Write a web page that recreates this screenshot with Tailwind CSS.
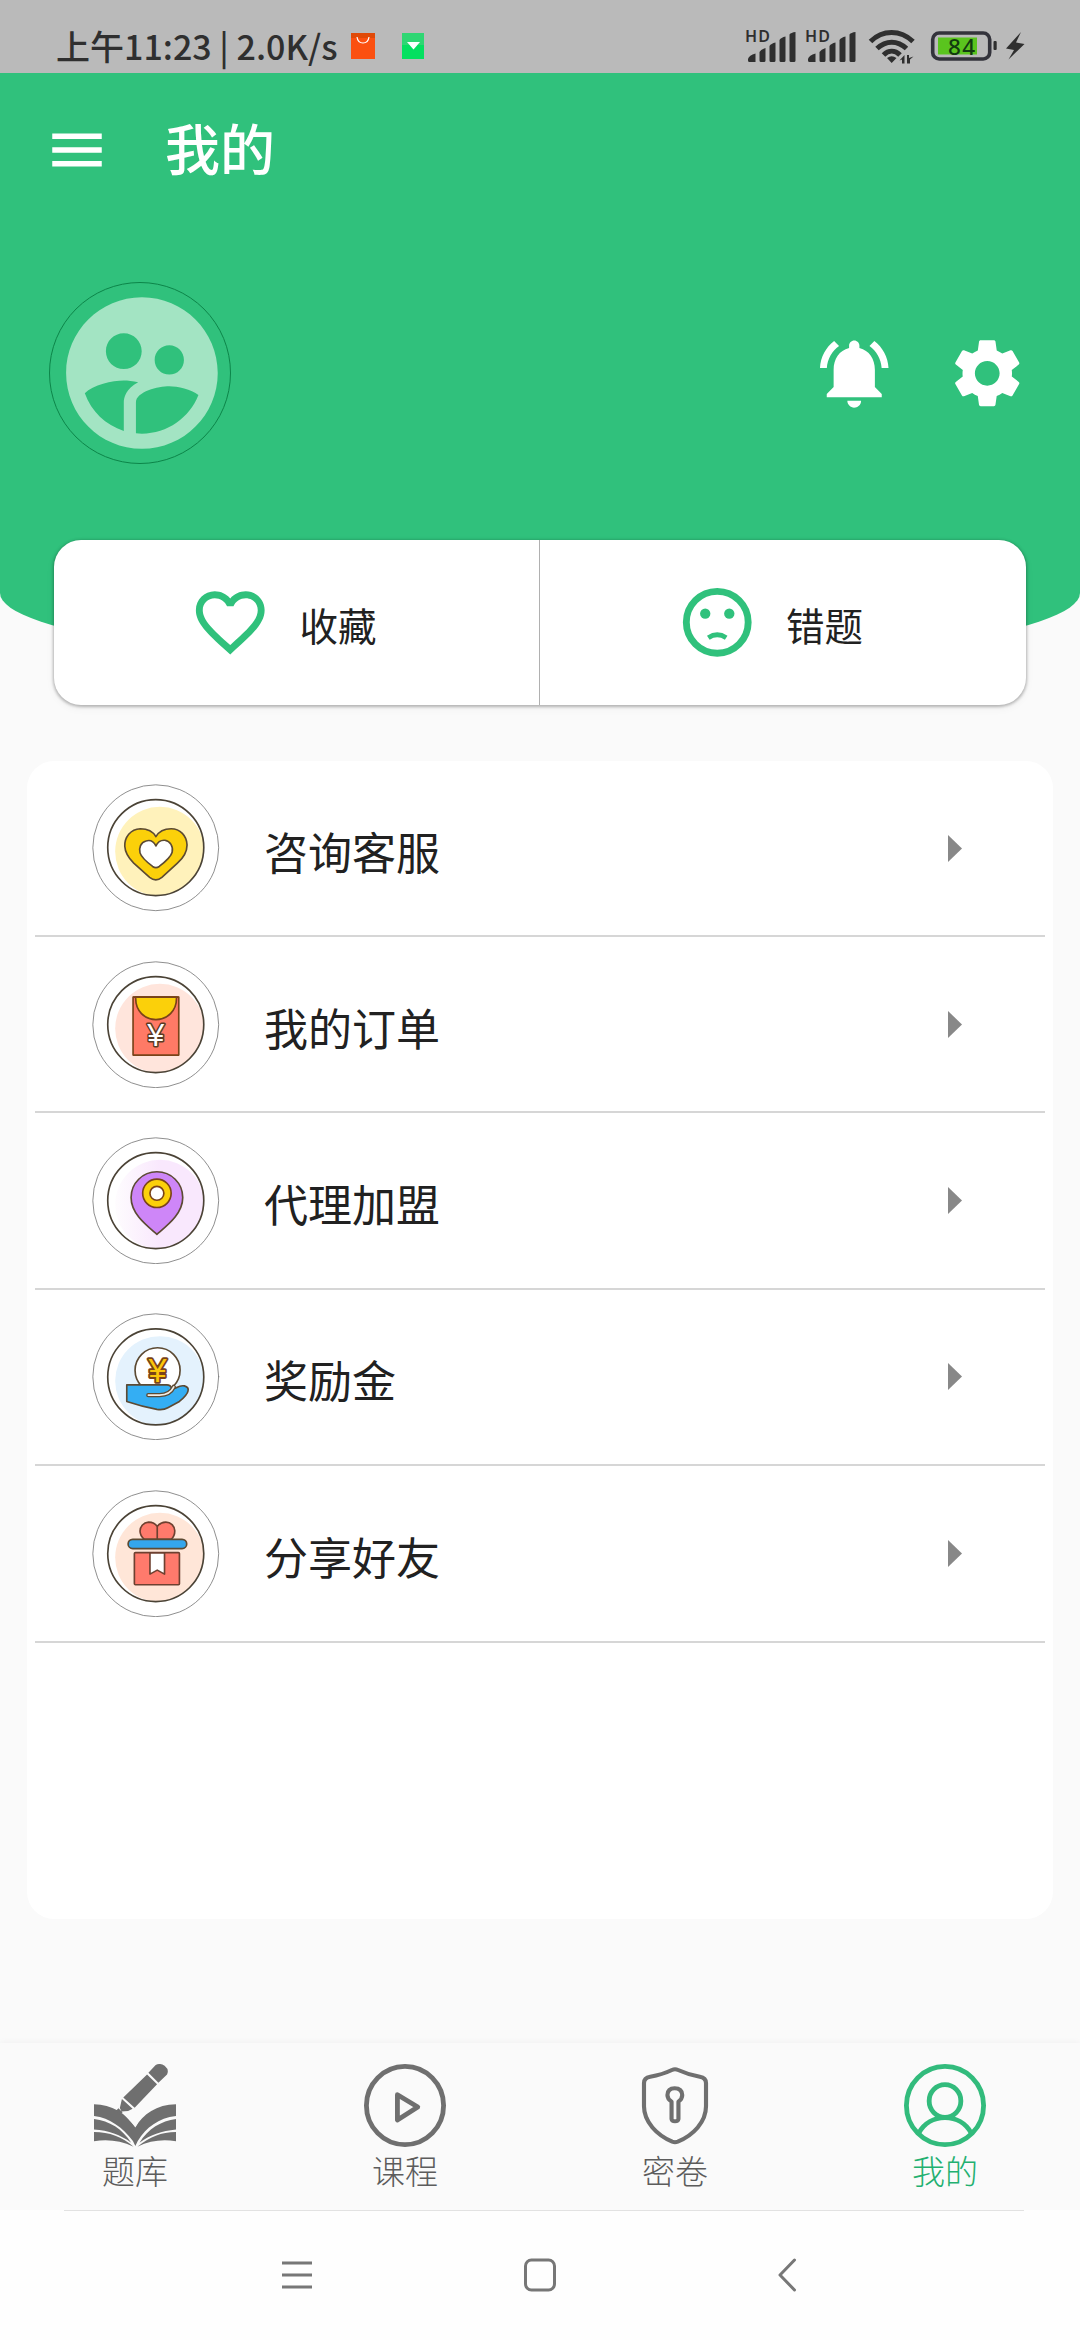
<!DOCTYPE html>
<html lang="zh-CN">
<head>
<meta charset="utf-8">
<title>我的</title>
<script src="https://cdn.jsdelivr.net/npm/@tailwindcss/browser@4"></script>
</head>
<body class="bg-[#fafafa]">
<div class="flex h-[2340px] w-[1080px] flex-col overflow-hidden bg-[#fafafa] font-['Noto_Sans_CJK_SC',sans-serif] text-[#212121]">

  <!-- Status bar -->
  <div class="flex h-[73px] shrink-0 items-start bg-[#bababa] pl-[56px] text-[#2f2f2f]">
    <div class="mt-[23px] w-[295px] whitespace-nowrap text-[34px] leading-[46px] font-medium tracking-[0px]">上午11:23 | 2.0K/s</div>
    <svg class="mt-[33px] h-[26px] w-[24px]" viewBox="0 0 24 26"><rect width="24" height="26" fill="#fb5010"/><rect width="24" height="5" fill="#e04a08"/><path d="M6 4c1 8 11 8 12 0" fill="none" stroke="#fff" stroke-width="1.2"/></svg>
    <svg class="mt-[33px] ml-[27px] h-[26px] w-[22px]" viewBox="0 0 22 26"><rect width="22" height="26" fill="#04e060"/><rect width="22" height="12" fill="#2fd673"/><path d="M5 9h13l-6.500 7.500z" fill="#fff"/></svg>
    <svg class="ml-[316px] h-[73px] w-[340px]" viewBox="740 0 340 73" fill="#2f2f2f">
      <g font-family="Noto Sans" font-weight="600" font-size="16"><text x="745" y="42" textLength="25">HD</text><text x="805" y="42" textLength="25">HD</text></g>
      <g id="bars"><path d="M748 59q1-4 7.500-5.500V62H749.500q-1.500 0-1.500-1.500zM759.500 52q1.500-2.500 6-4V60.500q0 1.500-1.500 1.500h-3q-1.500 0-1.500-1.500zM769.500 46q1.500-2.500 6-3.500V60.500q0 1.500-1.500 1.500h-3q-1.500 0-1.500-1.500zM779.500 40q1.500-2.500 6-3.500V60.500q0 1.500-1.500 1.500h-3q-1.500 0-1.500-1.500zM789.500 34.500q1.500-2 6-2.500V60.500q0 1.500-1.500 1.500h-3q-1.500 0-1.500-1.500z"/></g>
      <use href="#bars" x="60"/>
      <g fill="none" stroke="#2f2f2f" stroke-width="5"><path d="M870.500 41.500c12-12 30-12 42.500 0M877 48.500c9-8.500 20.500-8.500 29.500 0M883.500 55c5-5 11.500-5 16.500 0"/></g>
      <path d="M887 58q4.700-3.500 9.500 0l-4.800 5zM904.500 55v8.500h-2.500v-4l-2.500 1zM907 63.500V55h2v3l4.500-1.500-3.500 3v4z"/>
      <rect x="932.700" y="33" width="57" height="26" rx="6.500" fill="none" stroke="#33333b" stroke-width="3.600"/>
      <rect x="938" y="37.500" width="39" height="17" fill="#5ac41e"/>
      <rect x="993.500" y="41" width="3.200" height="9" rx="1"/>
      <text x="948" y="54.700" font-family="Noto Sans" font-weight="500" font-size="22.500" textLength="27" fill="#123a10">84</text>
      <path d="M1021 32l-15 16.500 8 1.500-5.500 9.500 16-15.500-8.500-1.500z"/>
    </svg>
  </div>

  <!-- Green header -->
  <header class="flex h-[595px] shrink-0 flex-col rounded-b-[50%_75px] bg-[#30c17c]">
    <div class="flex h-[154px] items-center pl-[44px]">
      <svg class="size-[66px]" viewBox="0 0 24 24" fill="#fff"><path d="M3 18h18v-2H3v2zm0-5h18v-2H3v2zm0-7v2h18V6H3z"/></svg>
      <h1 class="-mt-[9px] ml-[55px] text-[55px] leading-[66px] font-medium text-white">我的</h1>
    </div>
    <div class="mt-[54px] flex h-[184px] items-center pl-[49px]">
      <div class="flex size-[182px] items-center justify-center rounded-full border border-[#0c8549]">
        <svg class="ml-[3px] size-[182px] shrink-0" viewBox="0 0 24 24" fill="#a3e4c3"><path d="M11.990 2c-5.520 0-10 4.480-10 10s4.480 10 10 10 10-4.480 10-10-4.480-10-10-10zm3.610 6.340c1.070 0 1.930.86 1.930 1.930 0 1.070-.86 1.930-1.930 1.930-1.070 0-1.930-.86-1.930-1.930-.01-1.070.86-1.930 1.930-1.930zm-6-1.580c1.300 0 2.360 1.060 2.360 2.360 0 1.300-1.060 2.360-2.360 2.360s-2.360-1.060-2.360-2.360c0-1.310 1.050-2.360 2.360-2.360zm0 9.130v3.750c-2.400-.75-4.300-2.600-5.140-4.960 1.050-1.120 3.670-1.690 5.140-1.690.53 0 1.200.08 1.900.22-1.640.87-1.900 2.020-1.900 2.680zM11.990 20c-.27 0-.53-.01-.79-.04v-4.070c0-1.420 2.940-2.130 4.400-2.130 1.070 0 2.920.39 3.840 1.150-1.170 2.970-4.060 5.090-7.450 5.090z"/></svg>
      </div>
      <svg class="ml-[582px] size-[82.5px]" viewBox="0 0 24 24" fill="#fff"><path d="M7.580 4.080L6.150 2.650C3.750 4.480 2.170 7.300 2.030 10.500h2c.15-2.650 1.510-4.970 3.550-6.420zm12.390 6.420h2c-.15-3.200-1.730-6.020-4.120-7.850l-1.420 1.430c2.020 1.450 3.390 3.770 3.540 6.420zM18 11c0-3.070-1.640-5.640-4.500-6.320V4c0-.83-.67-1.500-1.500-1.500s-1.500.67-1.500 1.500v.68C7.630 5.360 6 7.920 6 11v5l-2 2v1h16v-1l-2-2v-5zm-6 11c.14 0 .27-.01.4-.04.65-.14 1.180-.58 1.440-1.180.1-.24.15-.5.15-.78h-4c.01 1.100.9 2 2.010 2z"/></svg>
      <svg class="ml-[50px] size-[82.5px]" viewBox="0 0 24 24" fill="#fff"><path d="M19.140 12.940c.04-.3.06-.61.06-.94 0-.32-.02-.64-.07-.94l2.030-1.580c.18-.14.23-.41.12-.61l-1.920-3.320c-.12-.22-.37-.29-.59-.22l-2.390.96c-.5-.38-1.030-.7-1.620-.94l-.36-2.540c-.04-.24-.24-.41-.48-.41h-3.840c-.24 0-.43.17-.47.41l-.36 2.540c-.59.24-1.130.57-1.620.94l-2.390-.96c-.22-.08-.47 0-.59.22L2.740 8.870c-.12.21-.08.47.12.61l2.030 1.580c-.05.3-.09.63-.09.94s.02.64.07.94l-2.030 1.580c-.18.14-.23.41-.12.61l1.920 3.320c.12.22.37.29.59.22l2.390-.96c.5.38 1.030.7 1.620.94l.36 2.540c.05.24.24.41.48.41h3.840c.24 0 .44-.17.47-.41l.36-2.540c.59-.24 1.130-.56 1.620-.94l2.390.96c.22.08.47 0 .59-.22l1.920-3.320c.12-.22.07-.47-.12-.61l-2.010-1.580zM12 15.600c-1.980 0-3.600-1.620-3.600-3.600s1.620-3.600 3.600-3.600 3.600 1.620 3.600 3.600-1.620 3.600-3.600 3.600z"/></svg>
    </div>
  </header>

  <!-- Quick actions -->
  <section class="z-10 mx-[54px] -mt-[128px] flex h-[165px] shrink-0 rounded-[27px] bg-white shadow-[0_1px_3px_1px_rgba(0,0,0,0.26),0_3px_10px_rgba(0,0,0,0.05)]">
    <div class="flex w-[486px] items-center border-r border-[#b0b0b0] pl-[135px]">
      <svg class="size-[82.5px]" viewBox="0 0 24 24" fill="#30c17c"><path d="M16.500 3c-1.740 0-3.410.81-4.500 2.090C10.910 3.810 9.240 3 7.500 3 4.420 3 2 5.420 2 8.500c0 3.780 3.400 6.860 8.550 11.540L12 21.350l1.450-1.320C18.600 15.360 22 12.280 22 8.500 22 5.420 19.580 3 16.500 3zm-4.400 15.550l-.1.100-.1-.1C7.140 14.240 4 11.390 4 8.500 4 6.500 5.500 5 7.500 5c1.540 0 3.040.99 3.570 2.360h1.870C13.460 5.990 14.960 5 16.500 5c2 0 3.500 1.500 3.500 3.500 0 2.890-3.140 5.740-7.900 10.050z"/></svg>
      <span class="mt-[2px] ml-[28px] text-[38.5px] leading-[48px]">收藏</span>
    </div>
    <div class="flex flex-1 items-center pl-[135.500px]">
      <svg class="size-[82.5px]" viewBox="0 0 24 24" fill="#30c17c"><circle cx="12" cy="12" r="9" fill="none" stroke="#30c17c" stroke-width="2"/><circle cx="8.500" cy="9.500" r="1.500"/><circle cx="15.500" cy="9.500" r="1.500"/><path d="M9.400 16.500q2.600-1.700 5.200 0" fill="none" stroke="#30c17c" stroke-width="1.400"/></svg>
      <span class="mt-[2px] ml-[28px] text-[38.5px] leading-[48px]">错题</span>
    </div>
  </section>

  <!-- Menu list -->
  <main class="mx-[27px] mt-[56px] h-[1158px] shrink-0 rounded-[27px] bg-white px-[8px]">
    <a class="flex h-[176.2px] items-center border-b-2 border-[#d6d6d6] pl-[57px]">
      <svg class="size-[127.5px] shrink-0" viewBox="97 44 383 385" fill="none" stroke="#5c4a33" stroke-width="5" stroke-linejoin="round">
        <clipPath id="c1"><circle cx="288.500" cy="236" r="145"/></clipPath>
        <circle cx="301" cy="248" r="135" fill="#fff2bb" stroke="none" clip-path="url(#c1)"/>
        <circle cx="288.500" cy="236.500" r="190" stroke="#777" stroke-width="2.500"/><circle cx="288.500" cy="236" r="145" stroke="#4b4336"/>
        <path fill="#fbd00a" d="M289 203C278 183 258 179 242 179C212 180 194 205 195 232C196 252 206 267 222 283L270 326Q289 341 307 326L354 283C374 265 383 250 383 228C382 200 362 179 335 179C315 179 298 187 289 203Z"/>
        <path fill="#fff" d="M289 231C281 215 268 213 259 216C243 220 237 238 241 252C245 265 258 277 279 293Q289 300 299 293C322 275 335 263 338 250C342 232 332 217 316 214C303 213 294 220 289 231Z"/>
      </svg>
      <span class="mt-[5px] ml-[44.500px] text-[44px] leading-[56px]">咨询客服</span>
      <svg class="mr-[83px] ml-auto h-[27px] w-[14px]" viewBox="0 0 14 27" fill="#888"><path d="M0 0L14 13.500L0 27z"/></svg>
    </a>
    <a class="flex h-[176.2px] items-center border-b-2 border-[#d6d6d6] pl-[57px]">
      <svg class="size-[127.5px] shrink-0" viewBox="97 572 383 385" fill="none" stroke="#5c4a33" stroke-width="5" stroke-linejoin="round">
        <clipPath id="c2"><circle cx="288.500" cy="764" r="145"/></clipPath>
        <circle cx="301" cy="776" r="135" fill="#ffe5dc" stroke="none" clip-path="url(#c2)"/>
        <circle cx="288.500" cy="764.500" r="190" stroke="#777" stroke-width="2.500"/><circle cx="288.500" cy="764" r="145" stroke="#4b4336"/>
        <rect x="220" y="681" width="138" height="175" fill="#ff7a66" stroke="#7a4319"/>
        <path d="M228 681c-2 42 28 68 61 68s64-26 62-68z" fill="#fbd00a" stroke="#7a4319"/>
        <path d="M220 681h138" stroke="#7a4319"/>
        <text x="288.500" y="830" text-anchor="middle" font-family="Liberation Sans" font-weight="400" font-size="92" fill="#fff" stroke="#5c3a22" stroke-width="9" paint-order="stroke">¥</text>
      </svg>
      <span class="mt-[5px] ml-[44.500px] text-[44px] leading-[56px]">我的订单</span>
      <svg class="mr-[83px] ml-auto h-[27px] w-[14px]" viewBox="0 0 14 27" fill="#888"><path d="M0 0L14 13.500L0 27z"/></svg>
    </a>
    <a class="flex h-[176.2px] items-center border-b-2 border-[#d6d6d6] pl-[57px]">
      <svg class="size-[127.5px] shrink-0" viewBox="97 51 383 385" fill="none" stroke="#5c4a33" stroke-width="5" stroke-linejoin="round">
        <clipPath id="c3"><circle cx="288.500" cy="243" r="145"/></clipPath>
        <linearGradient id="g3"><stop offset="0" stop-color="#fefcfe"/><stop offset=".5" stop-color="#f9e8fd"/></linearGradient>
        <circle cx="301" cy="255" r="135" fill="url(#g3)" stroke="none" clip-path="url(#c3)"/>
        <circle cx="288.500" cy="243.500" r="190" stroke="#777" stroke-width="2.500"/><circle cx="288.500" cy="243" r="145" stroke="#4b4336"/>
        <path d="M292 345C262 319 214 284 214 234C214 190 249 156 292 156S370 190 370 234C370 284 322 319 292 345Z" fill="#ce86f8"/>
        <circle cx="292" cy="221" r="43" fill="#fbd00a" stroke="#7a4319"/><circle cx="292" cy="221" r="21" fill="#fff" stroke="#7a4319"/>
      </svg>
      <span class="mt-[5px] ml-[44.500px] text-[44px] leading-[56px]">代理加盟</span>
      <svg class="mr-[83px] ml-auto h-[27px] w-[14px]" viewBox="0 0 14 27" fill="#888"><path d="M0 0L14 13.500L0 27z"/></svg>
    </a>
    <a class="flex h-[176.2px] items-center border-b-2 border-[#d6d6d6] pl-[57px]">
      <svg class="size-[127.5px] shrink-0" viewBox="97 579 383 385" fill="none" stroke="#5c4a33" stroke-width="5" stroke-linejoin="round" stroke-linecap="round">
        <clipPath id="c4"><circle cx="288.500" cy="772" r="145"/></clipPath>
        <circle cx="301" cy="784" r="135" fill="#e4f2fd" stroke="none" clip-path="url(#c4)"/>
        <circle cx="288.500" cy="771.500" r="190" stroke="#777" stroke-width="2.500"/><circle cx="288.500" cy="772" r="145" stroke="#4b4336"/>
        <circle cx="294" cy="752" r="68" fill="#fff"/>
        <text x="294" y="788" text-anchor="middle" font-family="Liberation Sans" font-size="98" fill="#fbc60a" stroke="#7a4319" stroke-width="11" paint-order="stroke">¥</text>
        <path d="M201 796H322Q334 796 336 806Q346 808 352 804Q364 797 375 799Q389 803 386 814Q384 826 360 846L325 865Q312 873 292 870C260 864 228 855 201 846Z" fill="#34aef3"/>
        <path d="M266 827H300Q332 826 343 802" stroke-width="13"/><path d="M266 827H300Q332 826 343 802" stroke="#f2ece4" stroke-width="5"/>
      </svg>
      <span class="mt-[5px] ml-[44.500px] text-[44px] leading-[56px]">奖励金</span>
      <svg class="mr-[83px] ml-auto h-[27px] w-[14px]" viewBox="0 0 14 27" fill="#888"><path d="M0 0L14 13.500L0 27z"/></svg>
    </a>
    <a class="flex h-[177px] items-center border-b-2 border-[#d6d6d6] pl-[57px]">
      <svg class="size-[127.5px] shrink-0" viewBox="97 90 383 385" fill="none" stroke="#5c4a33" stroke-width="5" stroke-linejoin="round">
        <clipPath id="c5"><circle cx="288.500" cy="282" r="145"/></clipPath>
        <circle cx="301" cy="294" r="135" fill="#ffe6d8" stroke="none" clip-path="url(#c5)"/>
        <circle cx="288.500" cy="282.500" r="190" stroke="#777" stroke-width="2.500"/><circle cx="288.500" cy="282" r="145" stroke="#4b4336"/>
        <path d="M293 200C285 188 276 187 267 187C250 188 241 202 241 214C241 226 248 234 254 239H335C342 233 346 225 346 213C345 198 334 187 319 187C309 187 300 191 293 200ZM293 198V239" fill="#ff7a6c" stroke="#6e4030"/>
        <rect x="205" y="239" width="177" height="28" rx="14" fill="#34a6ec"/>
        <rect x="224" y="279" width="136" height="97" rx="3" fill="#ff7a6c" stroke="#6e4030"/>
        <path d="M271 280V344L293 332L315 344V280Z" fill="#fff" stroke="#6e4030"/>
      </svg>
      <span class="mt-[5px] ml-[44.500px] text-[44px] leading-[56px]">分享好友</span>
      <svg class="mr-[83px] ml-auto h-[27px] w-[14px]" viewBox="0 0 14 27" fill="#888"><path d="M0 0L14 13.500L0 27z"/></svg>
    </a>
  </main>

  <!-- Bottom tabs -->
  <nav class="mt-auto grid h-[167px] shrink-0 grid-cols-4 bg-[#fafafa] text-[33px] leading-[40px] font-light text-[#5c5c5c] shadow-[0_-1px_6px_rgba(0,0,0,0.04)]">
    <div class="flex flex-col items-center pt-[20.500px]">
      <svg class="h-[83px] w-[82px]" viewBox="273 101 238 247" preserveAspectRatio="none" fill="#6f6f6f">
        <path d="M273 221C325 223 365 245 393 290C415 250 455 222 511 221V256C460 262 425 290 400 330L393 345L386 330C355 290 320 262 273 256Z"/>
        <path d="M350 240L393 288L410 262L385 225Z" fill="#fafafa"/>
        <path d="M273 265C318 270 355 295 381 335C350 312 315 298 273 296ZM511 265C468 270 430 295 405 335C435 312 470 300 511 296ZM273 303C318 303 355 318 388 347C350 330 315 324 273 331ZM511 303C468 303 435 318 399 347C435 330 470 324 511 331Z"/>
        <path d="M431 127L452 104Q465 97 478 106Q492 118 485 132L460 157ZM427 132L456 161L391 231L358 201ZM354 205L385 234L372 241L353 242L348 232ZM344 233L356 245L347 251L337 240Z"/>
      </svg>
      <span class="mt-[3px]">题库</span>
    </div>
    <div class="flex flex-col items-center pt-[20.500px]">
      <svg class="h-[83px] w-[82px]" viewBox="1057 101 238 249" preserveAspectRatio="none" fill="none" stroke="#6f6f6f" stroke-linejoin="round"><ellipse cx="1176" cy="225.500" rx="112" ry="117.500" stroke-width="14"/><path d="M1154 193L1213 230L1154 269Z" stroke-width="14"/></svg>
      <span class="mt-[3px]">课程</span>
    </div>
    <div class="flex flex-col items-center pt-[20.500px]">
      <svg class="h-[83px] w-[82px]" viewBox="273 101 238 249" preserveAspectRatio="none" fill="none" stroke="#6f6f6f" stroke-width="12" stroke-linejoin="round"><path d="M383 119Q392 115 401 119Q430 133 464 139Q482 142 482 158V228C482 275 445 315 400 334Q392 337 384 334C340 315 302 275 302 228V158Q302 142 320 139Q355 133 383 119Z"/><path d="M382 214Q370 206 370 194Q371 174 391 174Q412 174 413 194Q413 206 402 214V266Q401 273 392 273Q383 273 382 266Z"/></svg>
      <span class="mt-[3px]">密卷</span>
    </div>
    <div class="flex flex-col items-center pt-[20.500px] text-[#22b070]">
      <svg class="h-[83px] w-[82px]" viewBox="1057 101 238 249" preserveAspectRatio="none" fill="none" stroke="#32bb7c" stroke-width="14"><ellipse cx="1176" cy="225.500" rx="112" ry="117.500"/><ellipse cx="1176" cy="212" rx="46" ry="49"/><path d="M1100 308C1116 278 1145 262 1176 262S1236 278 1252 308"/></svg>
      <span class="mt-[3px]">我的</span>
    </div>
  </nav>

  <!-- System navigation -->
  <div class="flex h-[130px] shrink-0 flex-col bg-[#fefefe]">
    <div class="ml-[64px] h-px w-[960px] bg-[#e2e2e2]"></div>
    <div class="flex pt-[47px] pl-[282px]">
      <svg class="h-[34px] w-[30px]" viewBox="0 0 30 34" stroke="#777" stroke-width="3"><path d="M0 5h30M0 17h30M0 29h30"/></svg>
      <svg class="ml-[212px] h-[34px] w-[32px]" viewBox="0 0 32 34" fill="none" stroke="#777" stroke-width="3"><rect x="1.500" y="2" width="29" height="30" rx="6"/></svg>
      <svg class="ml-[221px] h-[34px] w-[20px]" viewBox="0 0 20 34" fill="none" stroke="#777" stroke-width="3" stroke-linecap="round" stroke-linejoin="round"><path d="M17.500 2L3 17l14.500 15"/></svg>
    </div>
  </div>
</div>
</body>
</html>
